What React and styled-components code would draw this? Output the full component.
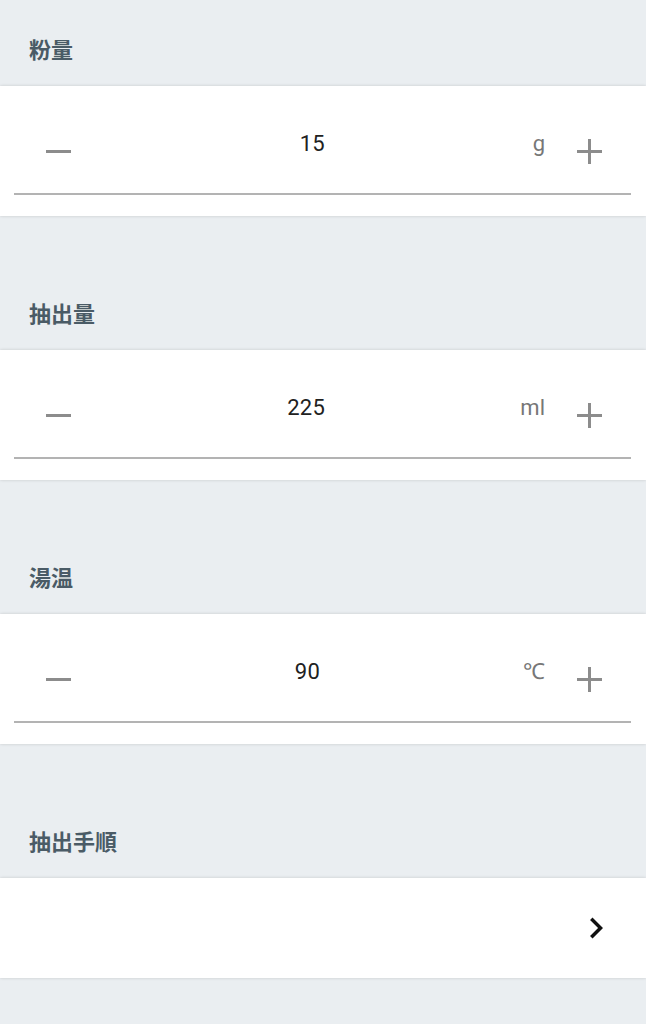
import React from "react";
import styled, { createGlobalStyle } from "styled-components";

const Global = createGlobalStyle`
  html, body { margin: 0; padding: 0; background: #eaeef1; }
  body { font-family: Roboto, "Noto Sans CJK JP", sans-serif; }
`;

const Page = styled.div`
  width: 646px;
  min-height: 1024px;
  background: #eaeef1;
  display: flex;
  flex-direction: column;
`;

const Header = styled.div`
  height: 86px;
  flex-shrink: 0;
  box-sizing: border-box;
  padding: 9px 0 0 29px;
  display: flex;
  align-items: center;
`;

const Title = styled.h2`
  margin: 0;
  font-family: "Noto Sans CJK JP", sans-serif;
  font-size: 22px;
  font-weight: 700;
  line-height: 1;
  color: #4a5b66;
`;

const Card = styled.div`
  background: #fff;
  box-shadow: 0 0 3px rgba(0, 0, 0, 0.16);
  margin-bottom: 48px;
  box-sizing: border-box;
  flex-shrink: 0;
`;

const FieldCard = styled(Card)`
  height: 130px;
  padding: 0 15px 0 14px;
`;

const Field = styled.div`
  height: 109px;
  box-sizing: border-box;
  padding-top: 24px;
  border-bottom: 2px solid #b3b3b3;
  display: flex;
  align-items: center;
`;

const IconButton = styled.button`
  width: 48px;
  height: 48px;
  padding: 0;
  border: 0;
  background: transparent;
  display: flex;
  align-items: center;
  justify-content: center;
  flex-shrink: 0;
  margin: ${(p) => (p.$side === "left" ? "0 10px 0 20px" : "0 18px 0 0")};
`;

const Value = styled.div`
  flex: 1;
  text-align: center;
  font-family: Roboto, sans-serif;
  font-size: 22px;
  line-height: 22px;
  color: #212121;
  margin-bottom: 15px;
  letter-spacing: 0.3px;
`;

const Unit = styled.div`
  font-family: Roboto, sans-serif;
  font-size: 22px;
  line-height: 22px;
  color: #777;
  margin: 0 20px 15px 0;
`;

const LinkCard = styled(Card)`
  height: 100px;
  display: flex;
  align-items: center;
  justify-content: flex-end;
  padding-right: 29px;
`;

const Minus = () => (
  <svg width="25" height="25" viewBox="0 0 25 25">
    <rect x="0" y="11" width="25" height="3" fill="#8c8c8c" />
  </svg>
);

const Plus = () => (
  <svg width="25" height="25" viewBox="0 0 25 25">
    <rect x="0" y="11" width="25" height="3" fill="#8c8c8c" />
    <rect x="11" y="0" width="3" height="25" fill="#8c8c8c" />
  </svg>
);

const Chevron = () => (
  <svg width="42" height="42" viewBox="0 0 24 24">
    <path d="M10 6L8.59 7.41 13.17 12l-4.58 4.59L10 18l6-6z" fill="#111" />
  </svg>
);

const Stepper = ({ title, value, unit }) => (
  <>
    <Header>
      <Title>{title}</Title>
    </Header>
    <FieldCard>
      <Field>
        <IconButton $side="left" aria-label="decrease">
          <Minus />
        </IconButton>
        <Value>{value}</Value>
        <Unit>{unit}</Unit>
        <IconButton $side="right" aria-label="increase">
          <Plus />
        </IconButton>
      </Field>
    </FieldCard>
  </>
);

export default function App() {
  return (
    <Page>
      <Global />
      <Stepper title="粉量" value="15" unit="g" />
      <Stepper title="抽出量" value="225" unit="ml" />
      <Stepper title="湯温" value="90" unit="℃" />
      <Header>
        <Title>抽出手順</Title>
      </Header>
      <LinkCard>
        <Chevron />
      </LinkCard>
    </Page>
  );
}
